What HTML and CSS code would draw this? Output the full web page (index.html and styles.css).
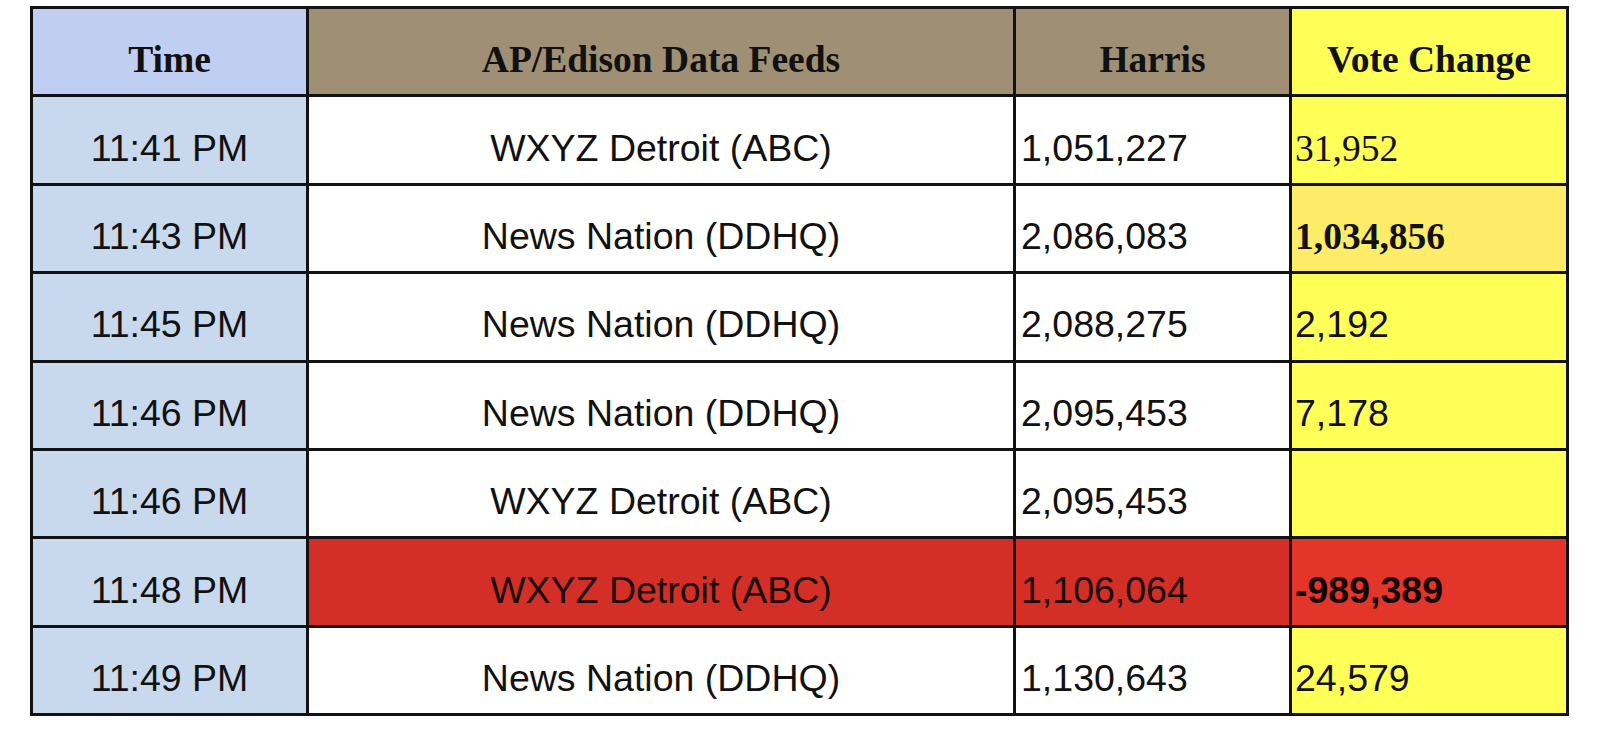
FILE: index.html
```html
<!DOCTYPE html>
<html lang="en">
<head>
<meta charset="utf-8">
<title>AP/Edison Data Feeds</title>
<link rel="stylesheet" href="styles.css">
</head>
<body>
<table class="feeds">
  <colgroup>
    <col class="c-time">
    <col class="c-feed">
    <col class="c-harris">
    <col class="c-vote">
  </colgroup>
  <thead>
    <tr>
      <th class="h-time">Time</th>
      <th class="h-tan">AP/Edison Data Feeds</th>
      <th class="h-tan">Harris</th>
      <th class="h-vote">Vote Change</th>
    </tr>
  </thead>
  <tbody>
    <tr>
      <td class="time">11:41 PM</td>
      <td class="feed">WXYZ Detroit (ABC)</td>
      <td class="num">1,051,227</td>
      <td class="vote serif">31,952</td>
    </tr>
    <tr>
      <td class="time">11:43 PM</td>
      <td class="feed">News Nation (DDHQ)</td>
      <td class="num">2,086,083</td>
      <td class="vote vote-gold serif bold">1,034,856</td>
    </tr>
    <tr>
      <td class="time">11:45 PM</td>
      <td class="feed">News Nation (DDHQ)</td>
      <td class="num">2,088,275</td>
      <td class="vote">2,192</td>
    </tr>
    <tr>
      <td class="time">11:46 PM</td>
      <td class="feed">News Nation (DDHQ)</td>
      <td class="num">2,095,453</td>
      <td class="vote">7,178</td>
    </tr>
    <tr>
      <td class="time">11:46 PM</td>
      <td class="feed">WXYZ Detroit (ABC)</td>
      <td class="num">2,095,453</td>
      <td class="vote"></td>
    </tr>
    <tr class="alert">
      <td class="time">11:48 PM</td>
      <td class="feed red">WXYZ Detroit (ABC)</td>
      <td class="num red">1,106,064</td>
      <td class="vote vote-red bold">-989,389</td>
    </tr>
    <tr>
      <td class="time">11:49 PM</td>
      <td class="feed">News Nation (DDHQ)</td>
      <td class="num">1,130,643</td>
      <td class="vote">24,579</td>
    </tr>
  </tbody>
</table>
</body>
</html>
```

FILE: styles.css
```css
html, body {
  margin: 0;
  padding: 0;
  background: #ffffff;
}

body {
  padding: 6px 0 0 30px;
}

.feeds {
  border-collapse: collapse;
  table-layout: fixed;
  width: 1536px;
  border: 3px solid #121212;
  font-family: "Liberation Sans", Arial, sans-serif;
  font-size: 37.5px;
  color: #111111;
}

.c-time { width: 276px; }
.c-feed { width: 707px; }
.c-harris { width: 276px; }
.c-vote { width: 277px; }

.feeds tr {
  height: 88.4px;
}

.feeds th,
.feeds td {
  border: 3px solid #121212;
  padding: 16px 0 0 0;
  vertical-align: middle;
  line-height: normal;
  white-space: nowrap;
}

.feeds th {
  font-family: "Liberation Serif", "Times New Roman", serif;
  font-weight: bold;
  font-size: 37.5px;
  text-align: center;
  padding-top: 15px;
}

.h-time { background: #c0cff1; }
.h-tan { background: #9e8f75; }
.h-vote { background: #ffff58; }

.time {
  background: #c8d9ee;
  text-align: center;
}

.feed {
  background: #ffffff;
  text-align: center;
}

.num {
  background: #ffffff;
  text-align: left;
  padding-left: 5px !important;
}

.vote {
  background: #ffff58;
  text-align: left;
  padding-left: 3px !important;
}

.vote-gold { background: #fdec68; }

.red {
  background: #d32f27;
  color: #1a0806;
}

.vote-red {
  background: #e3352a;
  color: #140404;
}

.serif {
  font-family: "Liberation Serif", "Times New Roman", serif;
}

.bold { font-weight: bold; }
```
